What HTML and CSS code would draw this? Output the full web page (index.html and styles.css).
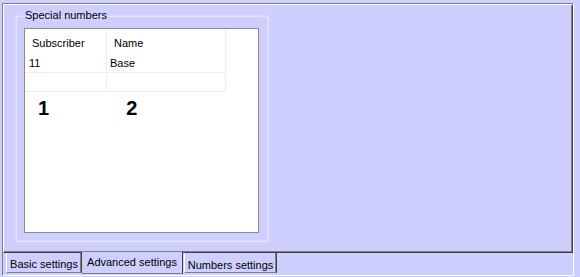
FILE: index.html
```html
<!DOCTYPE html>
<html lang="en">
<head>
    <meta charset="UTF-8">
    <meta name="viewport" content="width=device-width, initial-scale=1.0">
    <link rel="stylesheet" href="styles.css">
</head>
<body>
    <div class="control">
        <div class="page">
            <fieldset class="group">
                <legend>Special numbers</legend>
                <div class="listbox">
                    <div class="grid">
                        <div class="cell head">Subscriber</div>
                        <div class="cell head">Name</div>
                        <div class="cell row1 first">11</div>
                        <div class="cell row1">Base</div>
                        <div class="cell row2"></div>
                        <div class="cell row2"></div>
                    </div>
                    <div class="marks">
                        <span>1</span>
                        <span>2</span>
                    </div>
                </div>
            </fieldset>
        </div>
        <div class="tabstrip">
            <div class="tab basic">Basic settings</div>
            <div class="tab active">Advanced settings</div>
            <div class="tab numbers">Numbers settings</div>
        </div>
    </div>
</body>
</html>
```

FILE: styles.css
```css
* {
    margin: 0;
    padding: 0;
    box-sizing: border-box;
}

:root {
    --lavender: #cfcfff;
    --shadow: #808080;
    --dark: #404040;
}

body {
    background-color: var(--lavender);
    font-family: "Liberation Sans", Arial, sans-serif;
    font-size: 11px;
    color: #000;
}

.control {
    margin: 3px 0 0 2px;
    width: 572px;
    height: 273px;
    border-top: 1px solid var(--shadow);
    border-left: 1px solid var(--shadow);
    border-right: 1px solid #fff;
    border-bottom: 1px solid #fff;
}

/* tab page */
.page {
    height: 249px;
    padding: 4px 0 0 11px;
    border-top: 1px solid #fff;
    border-left: 1px solid #fff;
    border-right: 1px solid var(--dark);
    border-bottom: 1px solid var(--dark);
    box-shadow: inset -1px -1px 0 var(--shadow);
}

.group {
    width: 252px;
    height: 232px;
    padding: 7px 8px 0 8px;
    border: 1px solid #dadaf6;
    box-shadow: inset 1px 1px 0 #e4e4ff, 1px 1px 0 #e4e4ff;
}

.group legend {
    margin-left: -1px;
    padding: 0 2px;
    line-height: 12px;
}

.listbox {
    width: 235px;
    height: 205px;
    background: #fff;
    border: 1px solid #8a8a8a;
}

.grid {
    display: grid;
    grid-template-columns: 82px 119px;
    width: 201px;
}

.cell {
    border-right: 1px solid #ececec;
    line-height: 13px;
    white-space: nowrap;
}

.head {
    height: 22px;
    padding: 8px 0 0 7px;
}

.row1 {
    height: 22px;
    padding: 6px 0 0 3px;
    border-bottom: 1px solid #eeeeee;
}

.row1.first {
    padding-left: 4px;
}

.row2 {
    height: 19px;
    border-bottom: 1px solid #eeeeee;
}

.marks {
    display: flex;
    gap: 77px;
    margin-top: 5px;
    padding-left: 13px;
    font-size: 20px;
    font-weight: bold;
    line-height: 23px;
}

/* tabs along the bottom */
.tabstrip {
    display: flex;
    align-items: flex-start;
    padding-left: 3px;
}

.tab {
    height: 20px;
    padding-top: 5px;
    text-align: center;
    line-height: 13px;
    white-space: nowrap;
    border-left: 1px solid #fff;
    border-right: 1px solid var(--dark);
    border-bottom: 1px solid var(--shadow);
    box-shadow: inset -1px 0 0 var(--shadow);
}

.tab.basic {
    width: 76px;
}

.tab.numbers {
    width: 93px;
    margin-left: 1px;
    padding-top: 6px;
}

.tab.active {
    width: 101px;
    height: 22px;
    margin-top: -1px;
    padding-top: 4px;
    background: var(--lavender);
    border-left: none;
    box-shadow: none;
}
```
